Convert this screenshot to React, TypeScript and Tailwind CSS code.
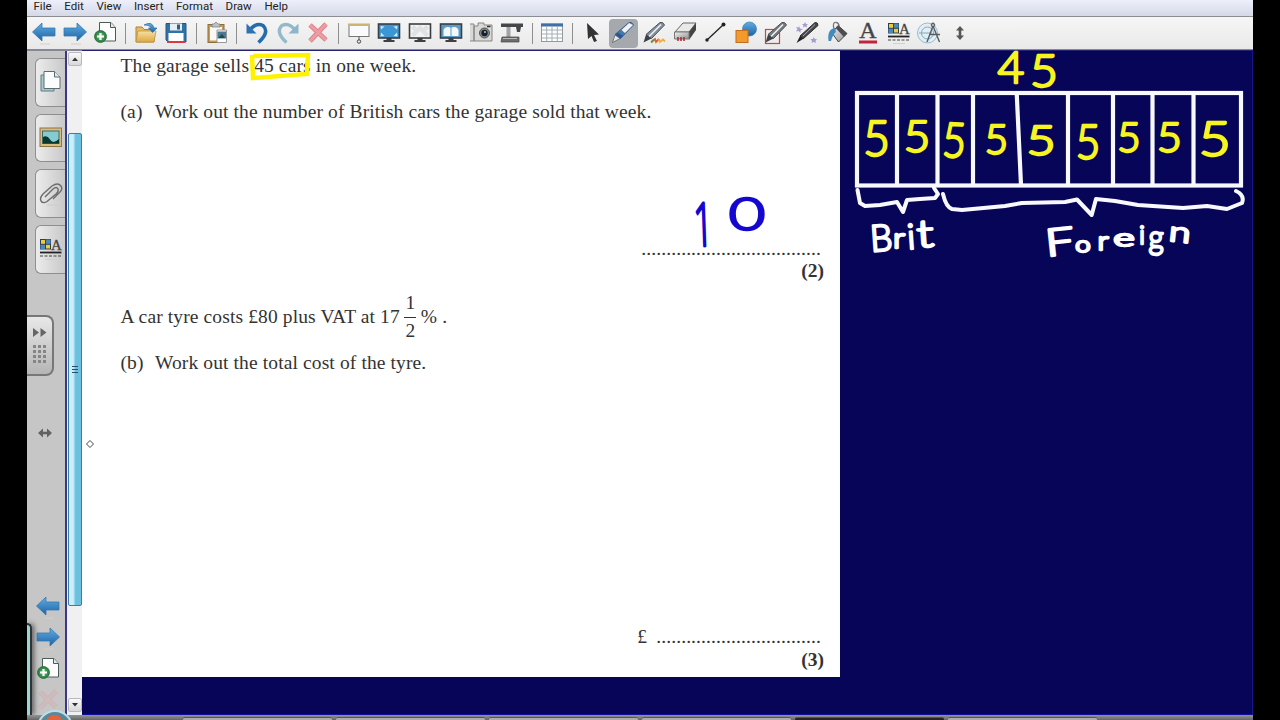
import type { ReactNode } from "react";

const menus = ["File", "Edit", "View", "Insert", "Format", "Draw", "Help"];

function Icon({ children, size = 24 }: { children: ReactNode; size?: number }) {
  return (
    <svg width={size} height={size} viewBox="0 0 24 24" fill="none" className="shrink-0 overflow-visible">
      {children}
    </svg>
  );
}

function Gradients() {
  return (
    <svg width="0" height="0" className="absolute">
      <defs>
        <linearGradient id="blue" x1="0" y1="0" x2="0" y2="1">
          <stop offset="0" stopColor="#62aee3" />
          <stop offset="1" stopColor="#1b62a4" />
        </linearGradient>
        <linearGradient id="folder" x1="0" y1="0" x2="0" y2="1">
          <stop offset="0" stopColor="#f8dfa0" />
          <stop offset="1" stopColor="#dca945" />
        </linearGradient>
        <linearGradient id="metal" x1="0" y1="0" x2="1" y2="1">
          <stop offset="0" stopColor="#f4f4f4" />
          <stop offset="1" stopColor="#8d8d8d" />
        </linearGradient>
        <radialGradient id="green">
          <stop offset="0" stopColor="#6cbf7c" />
          <stop offset="1" stopColor="#237a3b" />
        </radialGradient>
      </defs>
    </svg>
  );
}

function ArrowIcon({ right = false }: { right?: boolean }) {
  return (
    <Icon>
      <path
        d="M.5 11 10 2V7H23V15H10V20Z"
        transform={right ? "matrix(-1 0 0 1 24 0)" : undefined}
        fill="url(#blue)"
        stroke="#3578b2"
        strokeWidth="0.8"
      />
      <path d="M8 23H18" stroke="#d5cdc8" />
    </Icon>
  );
}

function AddPageIcon() {
  return (
    <Icon>
      <path d="M6.500 1.500H18L22.500 6.500V20H6.500Z" fill="#fdfdfd" stroke="#4c5a58" />
      <path d="M17.500 1.500V6.500H22.500" fill="#e4eaea" stroke="#4c5a58" />
      <circle cx="7.500" cy="15.500" r="6" fill="url(#green)" stroke="#2a6b3a" strokeWidth="0.8" />
      <path d="M7.500 12V19M4 15.500H11" stroke="#fff" strokeWidth="2.200" />
    </Icon>
  );
}

function DeleteIcon() {
  return (
    <Icon>
      <path d="M4 4 20 19M20 3 4 20" stroke="#e2848a" strokeWidth="4.800" />
      <path d="M4 4 20 19M20 3 4 20" stroke="#eb9da2" strokeWidth="2.800" />
    </Icon>
  );
}

function PropertiesIcon() {
  return (
    <Icon>
      <rect x="1.500" y="2.500" width="10" height="9.500" fill="#f0cb35" stroke="#27405c" />
      <path d="M6.500 2.500H11.500V7H6.500ZM1.500 7.500H6.500V12H1.500Z" fill="#4d88bd" />
      <path d="M6.500 2.500V12M1.500 7.300H11.500" stroke="#27405c" />
      <text x="12" y="12.500" fontSize="15" className="font-['Liberation_Serif',serif]" stroke="#444" strokeWidth="0.3" fill="#444">
        A
      </text>
      <path d="M1 15.500H22.500" stroke="#222" strokeWidth="1.800" />
      <path d="M1 19H22.500" stroke="#444" strokeWidth="1.200" strokeDasharray="3 1.500" />
      <path d="M6 22.500H18" stroke="#d0d0d0" />
    </Icon>
  );
}

function Monitor({ children, fill }: { children?: ReactNode; fill: string }) {
  return (
    <Icon>
      <path d="M9.500 16H14.500V19H17.500V21H6.500V19H9.500Z" fill="#3e4042" />
      <rect x="1.500" y="3" width="21" height="14" fill={fill} stroke="#3a3d42" strokeWidth="1.600" />
      {children}
    </Icon>
  );
}

function Pen({ body }: { body: string }) {
  return (
    <>
      <path d="M18 1.500Q21 .5 22.500 4L9.500 17.500 4 13.500Z" fill={body} stroke="#4a4f57" />
      <path d="M19 3.500 7 15.500" stroke="#f2f5f7" strokeWidth="1.500" />
      <path d="M4 13.500 9.500 17.500 1.500 21.500Z" fill="#3d4146" />
    </>
  );
}

const toolGroups: ReactNode[][] = [
  [<ArrowIcon />, <ArrowIcon right />, <AddPageIcon />],
  [
    <Icon>
      <path d="M2 6H8L10 8.500H20V21H2Z" fill="#e5bd60" stroke="#ad8535" />
      <path d="M2 21 4 10H22L20 21Z" fill="url(#folder)" stroke="#bd9343" strokeWidth="0.8" />
      <path d="M10 4Q18-.5 20 7H23L18.500 11.500 14.500 7H17Q16 4 10 4Z" fill="url(#blue)" stroke="#36709e" strokeWidth="0.7" />
    </Icon>,
    <Icon>
      <path d="M2 2.500H22V21H4L2 19Z" fill="#2e73a7" stroke="#285680" />
      <rect x="6" y="2.500" width="12" height="7" fill="#e7eff6" />
      <rect x="13" y="3.500" width="3" height="5" fill="#355b7a" />
      <rect x="4.500" y="12" width="15" height="8" fill="#fff" />
      <path d="M3 21H21" stroke="#d73a46" strokeWidth="2" />
    </Icon>,
  ],
  [
    <Icon>
      <rect x="3" y="3.500" width="16" height="18" fill="#c59c57" stroke="#8a6c3c" />
      <path d="M5 6H17V19.500H5Z" fill="#f8f8f4" />
      <path d="M7 6V3H9L11 1 13 3H15V6Z" fill="#bfc2c4" stroke="#777" strokeWidth="0.7" />
      <path d="M12 9H21.500V21.500H12Z" fill="#fff" stroke="#999" />
      <rect x="12.500" y="10.500" width="8.500" height="7" fill="#4b7892" />
      <path d="M13 17 17 13 20 17Z" fill="#204c45" />
    </Icon>,
  ],
  [
    <Icon>
      <path d="M4.500 9.500Q11 1 18 4.500 25 11 13.500 21.500" stroke="#266bad" strokeWidth="3.600" />
      <path d="M1.500 2.500V12.500H11.500Z" fill="#2c73b4" />
    </Icon>,
    <Icon>
      <path d="M19.500 9.500Q13 1 6 4.500-1 11 10.500 21.500" stroke="#94b9cb" strokeWidth="3.400" />
      <path d="M22.500 2.500V12.500H12.500Z" fill="#8eb5c9" />
    </Icon>,
    <DeleteIcon />,
  ],
  [
    <Icon>
      <rect x="2" y="4" width="20" height="11.500" fill="#fafafa" stroke="#777" />
      <rect x="1" y="2.500" width="22" height="2.500" fill="#cdb473" />
      <path d="M12 15.500V19" stroke="#555" />
      <circle cx="12" cy="20.500" r="1.700" stroke="#444" />
    </Icon>,
    <Monitor fill="#3d96d4">
      <path d="M3.500 5 7.500 5.500 4 8.500ZM20.500 5 16.500 5.500 20 8.500ZM3.500 15.500 7.500 15 4 11.500ZM20.500 15.500 16.500 15 20 11.500Z" fill="#c9ecff" />
    </Monitor>,
    <Monitor fill="#f2f2f2">
      <path d="M3 7 6 4 9 7 6 10ZM9 7 12 4 15 7 12 10ZM15 7 18 4 21 7 18 10ZM6 10 9 7 12 10 9 13ZM12 10 15 7 18 10 15 13ZM3 13 6 10 9 13 6 16ZM15 13 18 10 21 13 18 16Z" fill="#dfe2e3" />
    </Monitor>,
    <Monitor fill="#5a9cc8">
      <path d="M4.500 15V9Q6 5 11.500 6.500V15ZM12.500 15V6.500Q18 5 19.500 9V15Z" fill="#f4f8fa" />
    </Monitor>,
    <Icon>
      <path d="M1 3H5V20H1M5 5H9V2H15V4H23V20H5Z" fill="#d8d8d7" stroke="#858585" />
      <circle cx="15.500" cy="12" r="5" fill="#888" stroke="#555" />
      <circle cx="15.500" cy="12" r="3.200" fill="#17202b" />
      <circle cx="16" cy="11" r="1.100" fill="#9db5cc" />
      <path d="M18 5.500H21.500" stroke="#333" strokeWidth="1.500" />
    </Icon>,
    <Icon>
      <path d="M1 2.500H23V6H21L20 11H17L16 6H1Z" fill="#45474a" />
      <path d="M8.500 6V16" stroke="#a1a3a4" strokeWidth="4" />
      <path d="M2 16H19V21H1Z" fill="#6b6d6f" stroke="#444" strokeWidth="0.7" />
      <path d="M3 17.500H17" stroke="#b9b9b9" />
    </Icon>,
  ],
  [
    <Icon>
      <rect x="1.500" y="3" width="21" height="17.500" fill="#fdfdfd" stroke="#939ba2" />
      <rect x="1" y="2.500" width="22" height="3" fill="#3b73a8" />
      <path d="M6.700 5V20M12 5V20M17.300 5V20M2 9H22M2 13H22M2 17H22" stroke="#a4afb5" />
    </Icon>,
  ],
  [
    <Icon>
      <path d="M6 2 18 13.500 13 14 16 20 13 21 10.500 15 7 18Z" fill="#303235" />
    </Icon>,
    <Icon>
      <path d="M18 1.500Q21 .5 22.500 4L9.500 17.500 4 13.500Z" fill="#4977a9" stroke="#44628a" />
      <path d="M18 2 10.500 9 14 12 22 4Z" fill="#f0f2f6" />
      <path d="M7 11.500 4 14 9.500 17.500 12 15Z" fill="#285796" />
      <path d="M4 14 9 17.500 1.500 21.500Z" fill="#e8e8e8" stroke="#555" strokeWidth="0.7" />
    </Icon>,
    <Icon>
      <Pen body="#87919d" />
      <path d="M9.500 21 13 18 14 21 17 18" stroke="#df6330" strokeWidth="1.800" />
      <path d="M17 18 18 21 21 18.500 23 20.500" stroke="#e8b23c" strokeWidth="1.800" />
      <path d="M9 21.500 12 18.500" stroke="#579c54" strokeWidth="1.800" />
    </Icon>,
    <Icon>
      <path d="M2 11 10 2H23L16 11Z" fill="#e9e9e9" stroke="#666" />
      <path d="M16 11 23 2V9L16 19Z" fill="#444" />
      <path d="M1.500 11H16V18H1.500Z" fill="url(#metal)" stroke="#777" />
      <path d="M5 16V20M8 16V20M11 16V20" stroke="#a92731" strokeWidth="1.500" />
    </Icon>,
    <Icon>
      <path d="M4.500 18.500 20 4" stroke="#222" strokeWidth="1.300" />
      <circle cx="4" cy="19" r="1.700" fill="#222" />
      <circle cx="20.500" cy="3.500" r="2" fill="#222" />
    </Icon>,
    <Icon>
      <circle cx="15.500" cy="8" r="7" fill="url(#blue)" stroke="#3c7fae" strokeWidth="0.7" />
      <rect x="2" y="9.500" width="12" height="12" fill="#f39a2d" stroke="#c16d1a" />
    </Icon>,
    <Icon>
      <rect x="1.500" y="8.500" width="14" height="14" stroke="#d0424b" strokeWidth="1.200" />
      <Pen body="#777a7d" />
    </Icon>,
    <Icon>
      <path d="M20 1.500Q23 1 23 4.500L8 18 5 15Z" fill="#444649" stroke="#333" />
      <path d="M20 3.500 8 15" stroke="#aaaeb3" />
      <path d="M5 15 8 18 1.500 22Z" fill="#222" />
      <path d="M4 5 5 7.500 8 8 5.500 9.500 5.500 12 3.500 10 1 10.500 2.500 8 1 6 3.500 6.500ZM10 1 11 3 13 3 11.500 4.500 12 6.500 10 5.500 8 6.500 8.500 4.500 7 3 9 3ZM18.500 16 20 18 22 18 20.500 20 21 22 18.500 21 16.500 22 17 20 15.500 18 18 18Z" fill="#a79bd0" />
    </Icon>,
    <Icon>
      <path d="M8 8Q6 .5 10.500 1.500 14 2 13 10" stroke="#777" strokeWidth="1.300" />
      <path d="M6 12 12 4.500 21 12.500 12.500 21Z" fill="url(#metal)" stroke="#444" />
      <path d="M12 4.500 21 12.500 18 16 10 7.500Z" fill="#4b4d50" />
      <path d="M9 7Q1 8 2.500 20L5 20Q7 13 10 11Z" fill="#438bbb" />
    </Icon>,
    <Icon>
      <text x="12" y="17" fontSize="24" textAnchor="middle" className="font-['Liberation_Serif',serif]" stroke="#454545" strokeWidth="0.4" fill="#454545">
        A
      </text>
      <rect x="3" y="19.500" width="18" height="3" fill="#c5223e" />
    </Icon>,
    <PropertiesIcon />,
    <Icon>
      <circle cx="10.500" cy="12" r="10" fill="#e4eef2" stroke="#94bccf" />
      <circle cx="10.500" cy="12" r="6" stroke="#78aac6" />
      <path d="M2 12H15M16 3V1" stroke="#7da9bf" />
      <path d="M16 5 10 21M16 5 22.500 21M12 13.500H23" stroke="#555d62" strokeWidth="1.400" />
      <circle cx="16" cy="4" r="1.800" fill="#aaa" stroke="#555" />
    </Icon>,
    <Icon>
      <path d="M12 5 16 9.500H13.300V14.500H16L12 19 8 14.500H10.700V9.500H8Z" fill="#555" />
    </Icon>,
  ],
];

function Toolbar() {
  return (
    <div className="flex h-[35px] items-center border-t border-b-2 border-t-[#8b8d91] border-b-[#85889a] bg-linear-to-b from-[#f6f6f6] to-[#e9e9e9] pl-[1.7px]">
      {toolGroups.map((group, g) => (
        <div key={g} className="flex items-center">
          {g > 0 && (
            <div className="flex w-[9.9px] justify-center">
              <span className="h-[21px] w-px bg-[#8f8f8f]" />
            </div>
          )}
          {group.map((icon, i) => (
            <div
              key={i}
              className={
                g === 6 && i === 1
                  ? "mx-[1px] flex h-[29px] w-[28.600px] items-center justify-center rounded-sm bg-[#a5a8ad]"
                  : "flex h-[30px] w-[30.600px] items-center justify-center"
              }
            >
              {icon}
            </div>
          ))}
        </div>
      ))}
    </div>
  );
}

const sideTabs = [
  <Icon>
    <path d="M2 5H15V21H2Z" fill="#a8c9ce" stroke="#5f7c82" />
    <path d="M5 1.500H15.500L21 7V18.500H5Z" fill="#fbfcfc" stroke="#5d6c70" />
    <path d="M15.500 1.500V7H21" fill="#dfe8ea" stroke="#5d6c70" />
  </Icon>,
  <Icon>
    <rect x="1" y="2" width="21.500" height="18.500" fill="#d9bd7e" stroke="#8e7344" />
    <rect x="3.500" y="5" width="16.500" height="12.500" fill="#87cbd2" stroke="#466" />
    <path d="M4 11Q8 8.500 11 13.500T20 13V17.500H4Z" fill="#0a372e" />
  </Icon>,
  <Icon>
    <path
      d="M6 15 14 7Q17.500 4 19 7 20 9 17 12L8 19.500Q4 22 2 19 .5 16 4 12L13 4Q19 0 22 4 24 7 21 10L14 17"
      stroke="#6c6c6c"
      strokeWidth="1.400"
    />
    <path d="M8 23H19" stroke="#ccc" />
  </Icon>,
  <PropertiesIcon />,
];

function Sidebar() {
  return (
    <aside className="relative flex w-[38px] shrink-0 flex-col overflow-hidden bg-[#c6c6c6] pt-[7px]">
      <div className="flex flex-col items-end gap-[7px]">
        {sideTabs.map((icon, i) => (
          <div
            key={i}
            className="flex h-[48.700px] w-[30px] items-center justify-center rounded-l-md border border-r-0 border-[#8e8e8e] bg-linear-to-r from-[#ececec] to-[#c8c8c8]"
          >
            {icon}
          </div>
        ))}
      </div>

      <div className="mt-[41px] flex h-[61px] w-[27px] items-center justify-center rounded-r-lg border-2 border-l-0 border-[#777] bg-linear-to-b from-[#e8e8e8] to-[#b5b5b5]">
        <svg width="20" height="42" viewBox="0 0 20 42">
          <path d="M3 4 9 8.500 3 13ZM10.500 4 16.500 8.500 10.500 13Z" fill="#666" />
          <g fill="#858585">
            {[0, 1, 2, 3].map((r) =>
              [0, 1, 2].map((c) => <rect key={`${r}${c}`} x={3 + c * 5} y={21 + r * 5} width="3" height="3" />)
            )}
          </g>
        </svg>
      </div>

      <svg width="14" height="12" viewBox="0 0 14 12" className="mt-[51px] ml-[11px] shrink-0">
        <path d="M0 6 5 1.500V4.700H9V1.500L14 6 9 10.500V7.300H5V10.500Z" fill="#626262" />
      </svg>

      <div className="mt-[156px] flex flex-col items-center gap-[7px] pl-[3px]">
        <ArrowIcon />
        <ArrowIcon right />
        <AddPageIcon />
        <div className="opacity-25">
          <DeleteIcon />
        </div>
      </div>

      {/* Edge of the window behind */}
      <div className="absolute bottom-0 left-0 h-[92px] w-[5px] rounded-tr-md border-t-2 border-r-2 border-[#333] bg-[#9fd3d5] shadow-[2px_0_5px_#555]" />
    </aside>
  );
}

function ScrollButton({ down = false }: { down?: boolean }) {
  return (
    <div className="flex h-[14px] w-[14px] items-center justify-center rounded-xs border border-[#b9b9b9] bg-linear-to-b from-[#fafafa] to-[#d8d8d8]">
      <svg width="6" height="4" viewBox="0 0 6 4" className={down ? "rotate-180" : ""}>
        <path d="M0 4 3 .5 6 4Z" fill="#333" />
      </svg>
    </div>
  );
}

function Scrollbar() {
  return (
    <div className="flex w-[17px] shrink-0 flex-col items-center border-l-2 border-[#38388a] bg-[#f0f0f2] pt-px">
      <ScrollButton />
      <div className="mt-[67px] flex h-[473px] w-[14px] flex-col items-center justify-center gap-[2px] rounded-xs border border-[#3c7f9d] bg-linear-to-r from-[#c9effb] from-35% to-[#6cc0e0] to-55%">
        <span className="h-px w-[6px] bg-[#25506a]" />
        <span className="h-px w-[6px] bg-[#25506a]" />
        <span className="h-px w-[6px] bg-[#25506a]" />
      </div>
      <div className="mt-auto mb-[3px]">
        <ScrollButton down />
      </div>
    </div>
  );
}

function Worksheet() {
  return (
    <main className="relative h-[626px] w-[758px] bg-white pt-[3px] pr-4 pl-[38.500px] font-['Liberation_Serif',serif] text-[19.500px] leading-6 tracking-[0.120px] whitespace-nowrap text-[#333]">
      <p>
        The garage sells{" "}
        <span className="relative">
          45 cars
          <svg width="64" height="30" viewBox="0 0 64 30" className="absolute -top-[3px] -left-[5px]">
            <path d="M4 4 59 3 58 22 4 26 3 3" fill="none" stroke="#fff200" strokeWidth="4.500" />
          </svg>
        </span>{" "}
        in one week.
      </p>
      <p className="mt-[22px] flex">
        <span className="w-[34.500px]">(a)</span>
        Work out the number of British cars the garage sold that week.
      </p>

      <div className="mt-[113px] flex flex-col items-end">
        <p className="mr-[3px] h-[22px]">....................................</p>
        <p className="font-bold tracking-normal">(2)</p>
      </div>

      <p className="mt-[11px] flex h-[46px] items-center">
        A car tyre costs £80 plus VAT at 17
        <span className="mx-[4.500px] flex flex-col items-center leading-[22px]">
          <span className="pb-[3px]">1</span>
          <span className="h-px w-[12px] bg-[#333]" />
          <span className="pt-[2px]">2</span>
        </span>
        % .
      </p>
      <p className="mt-[11px] flex">
        <span className="w-[34.500px]">(b)</span>
        Work out the total cost of the tyre.
      </p>

      <div className="mt-[250px] flex flex-col items-end">
        <p className="mr-[3px] flex h-[23px]">
          <span className="mr-[9px]">£</span>
          <span>.................................</span>
        </p>
        <p className="font-bold tracking-normal">(3)</p>
      </div>

      {/* Pen answer */}
      <svg width="90" height="70" viewBox="690 190 90 70" className="absolute top-[139px] left-[608px] overflow-visible">
        <text
          transform="translate(704 246) rotate(-2) scale(0.55 1)"
          textAnchor="middle"
          fontSize="60"
          fill="#1408d0"
          stroke="#1408d0"
          strokeWidth="3"
          strokeLinejoin="round"
          className="font-['Open_Sans',sans-serif] font-light tracking-normal"
        >
          1
        </text>
        <Ink ch="0" x={747} y={230} size={45} sx={1.4} color="#1408d0" width={2.5} />
      </svg>

      <svg width="10" height="10" viewBox="0 0 10 10" className="absolute top-[388px] left-[3px]">
        <path d="M5 1.500 8.500 5 5 8.500 1.500 5Z" fill="#fff" stroke="#444" />
      </svg>
    </main>
  );
}

type InkProps = {
  ch: string;
  x: number;
  y: number;
  size: number;
  sx?: number;
  rotate?: number;
  color?: string;
  width?: number;
};

// One handwritten character, centred on x and standing on y
function Ink({ ch, x, y, size, sx = 1, rotate = 0, color = "#ffffff", width = 2 }: InkProps) {
  return (
    <text
      transform={`translate(${x} ${y}) rotate(${rotate}) scale(${sx} 1)`}
      textAnchor="middle"
      fontSize={size}
      fill={color}
      stroke={color}
      strokeWidth={width}
      strokeLinejoin="round"
      className="font-['Lato',sans-serif] font-light tracking-normal"
    >
      {ch}
    </text>
  );
}

const fives = [
  { x: 876.5, y: 156, size: 49, sx: 0.94 },
  { x: 917, y: 152, size: 44, sx: 1.04 },
  { x: 953.5, y: 157, size: 48, sx: 0.84, rotate: 3 },
  { x: 996.5, y: 154, size: 41, sx: 0.98 },
  { x: 1041, y: 155, size: 42, sx: 1.2 },
  { x: 1088, y: 159, size: 47, sx: 0.9 },
  { x: 1129, y: 152, size: 42, sx: 0.96 },
  { x: 1169.5, y: 152, size: 42, sx: 1.02 },
  { x: 1215, y: 156, size: 48, sx: 1.16 },
];

const words = [
  { ch: "B", x: 882, y: 251, size: 37, sx: 0.95, rotate: -4 },
  { ch: "r", x: 899, y: 248, size: 28, sx: 1.2 },
  { ch: "i", x: 912, y: 249, size: 35, rotate: -4 },
  { ch: "t", x: 926, y: 247, size: 38, sx: 1.3, rotate: -4 },
  { ch: "F", x: 1061, y: 255, size: 38, sx: 1.35, rotate: -6 },
  { ch: "o", x: 1083, y: 252, size: 22, sx: 1.25 },
  { ch: "r", x: 1103, y: 250, size: 26, sx: 1.2 },
  { ch: "e", x: 1124, y: 246, size: 23, sx: 1.75 },
  { ch: "i", x: 1142, y: 244, size: 25 },
  { ch: "g", x: 1156, y: 249, size: 33, sx: 0.9 },
  { ch: "n", x: 1179, y: 242, size: 28, sx: 1.4, rotate: 6 },
];

function BarModel() {
  return (
    <svg width="413" height="300" viewBox="840 51 413 300" className="-mr-px shrink-0 overflow-visible">
      <Ink ch="4" x={1011} y={83} size={44} sx={1.05} color="#f7f51f" width={2.4} />
      <Ink ch="5" x={1044} y={87} size={46} sx={1.05} color="#f7f51f" width={2.4} />

      <g fill="none" stroke="#f8f9ff" strokeWidth="4.200">
        <rect x="857" y="93" width="384" height="92.500" />
        <path d="M897 93V185M937.500 93V185M973 91V185M1016.700 93 1021 185M1068 93V185M1113 93V185M1152.500 93V185M1193.500 91V185" />
      </g>
      {fives.map((five) => (
        <Ink key={five.x} ch="5" color="#f7f51f" width={2.4} {...five} />
      ))}

      <g fill="none" stroke="#f8f9ff" strokeWidth="4" strokeLinecap="round" strokeLinejoin="round">
        <path d="M857.500 190 860 203 865 206 880 205 897 202 903 212 907 200 920 199 935 198 938 194 934 188" />
        <path d="M943 194Q946 207 952 209L962 210 1005 206 1022 203 1065 202 1077 199.500 1091.700 215 1096 199 1115 201 1138 205 1183 208 1207 206 1227 209 1242 203Q1245 195 1236 191" />
      </g>
      {words.map((letter) => (
        <Ink key={letter.x} width={2.4} {...letter} />
      ))}
    </svg>
  );
}

function Taskbar() {
  return (
    <footer className="relative flex h-[5px] gap-1 border-t border-[#8b8ba8] bg-linear-to-b from-[#8b8b8b] to-[#666] pl-[156px]">
      {[0, 1, 2, 3, 4, 5].map((i) => (
        <span
          key={i}
          className={
            i === 4
              ? "mt-px h-[3px] w-[149px] rounded-t-xs border-t border-[#555] bg-[#2b2224]"
              : "mt-px h-[3px] w-[149px] rounded-t-xs border-t border-[#555] bg-[#aeada9]"
          }
        />
      ))}
      <svg width="36" height="10" viewBox="0 0 36 10" className="absolute bottom-0 left-[10px]">
        <circle cx="18" cy="18" r="17" fill="#5d8796" stroke="#b9dfea" strokeWidth="2" />
        <path d="M9 10Q14 3 22 6L25 10Z" fill="#e3633c" />
      </svg>
    </footer>
  );
}

export default function App() {
  return (
    <div className="flex h-[720px] w-[1280px] justify-center overflow-hidden bg-black">
      <Gradients />
      <div className="flex w-[1226px] flex-col">
        <nav className="flex h-4 gap-[12.700px] bg-linear-to-b from-[#edf0fb] to-[#d5d9e6] pl-[6.500px] font-['Roboto',sans-serif] text-[11.500px] leading-[13px] text-[#222]">
          {menus.map((menu) => (
            <span key={menu}>{menu}</span>
          ))}
        </nav>
        <Toolbar />
        <div className="flex min-h-0 flex-1">
          <Sidebar />
          <Scrollbar />
          <div className="-mt-px flex flex-1 items-start border-t border-r border-b border-t-[#23236e] border-r-[#171789] border-b-[#1010a0] bg-[#070558]">
            <Worksheet />
            <BarModel />
          </div>
        </div>
        <Taskbar />
      </div>
    </div>
  );
}
